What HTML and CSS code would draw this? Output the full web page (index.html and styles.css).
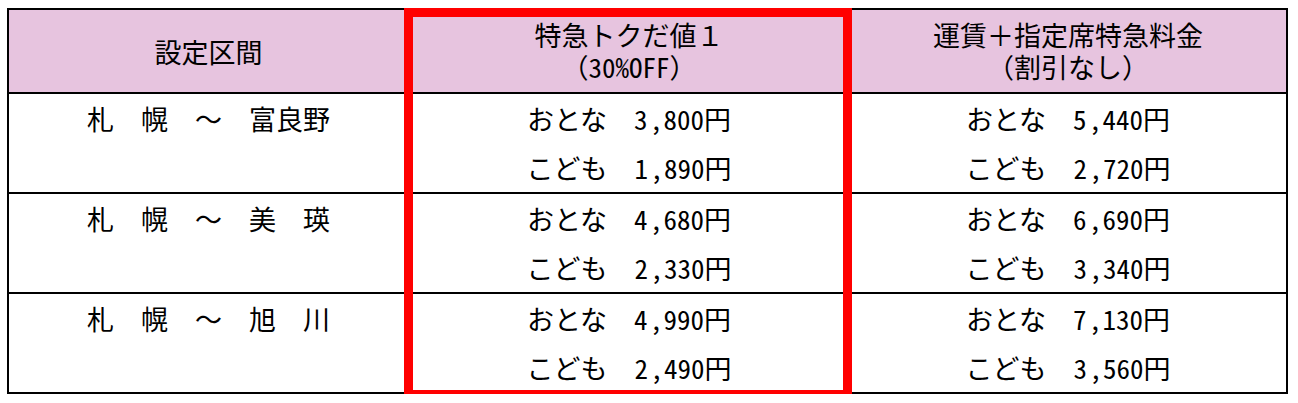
FILE: index.html
```html
<!DOCTYPE html>
<html lang="ja">
<head>
<meta charset="utf-8">
<title>特急トクだ値</title>
<link rel="stylesheet" href="styles.css">
</head>
<body>
<div class="wrap">
  <table class="fares">
    <colgroup>
      <col class="c1">
      <col class="c2">
      <col class="c3">
    </colgroup>
    <thead>
      <tr>
        <th>設定区間</th>
        <th><div class="ln">特急トクだ値１</div><div class="ln">（<span class="hw">30%OFF</span>）</div></th>
        <th><div class="ln">運賃＋指定席特急料金</div><div class="ln">（割引なし）</div></th>
      </tr>
    </thead>
    <tbody>
      <tr>
        <td class="sec"><div class="ln">札　幌　～　富良野</div></td>
        <td><div class="ln">おとな　<span class="hw">3<span class="cm">,</span>800</span>円</div><div class="ln">こども　<span class="hw">1<span class="cm">,</span>890</span>円</div></td>
        <td><div class="ln">おとな　<span class="hw">5<span class="cm">,</span>440</span>円</div><div class="ln">こども　<span class="hw">2<span class="cm">,</span>720</span>円</div></td>
      </tr>
      <tr>
        <td class="sec"><div class="ln">札　幌　～　美　瑛</div></td>
        <td><div class="ln">おとな　<span class="hw">4<span class="cm">,</span>680</span>円</div><div class="ln">こども　<span class="hw">2<span class="cm">,</span>330</span>円</div></td>
        <td><div class="ln">おとな　<span class="hw">6<span class="cm">,</span>690</span>円</div><div class="ln">こども　<span class="hw">3<span class="cm">,</span>340</span>円</div></td>
      </tr>
      <tr>
        <td class="sec"><div class="ln">札　幌　～　旭　川</div></td>
        <td><div class="ln">おとな　<span class="hw">4<span class="cm">,</span>990</span>円</div><div class="ln">こども　<span class="hw">2<span class="cm">,</span>490</span>円</div></td>
        <td><div class="ln">おとな　<span class="hw">7<span class="cm">,</span>130</span>円</div><div class="ln">こども　<span class="hw">3<span class="cm">,</span>560</span>円</div></td>
      </tr>
    </tbody>
  </table>
  <div class="highlight"></div>
</div>
</body>
</html>
```

FILE: styles.css
```css
html, body {
  margin: 0;
  padding: 0;
  background: #ffffff;
}

body {
  font-family: "Noto Sans CJK JP", "Noto Sans", sans-serif;
  color: #000000;
}

.wrap {
  position: relative;
  padding: 8px 0 0 7px;
  width: 1279px;
}

.fares {
  border-collapse: collapse;
  table-layout: fixed;
  width: 1279px;
  font-size: 27px;
}

.c1 { width: 401px; }
.c2 { width: 440px; }
.c3 { width: 438px; }

.fares th,
.fares td {
  border: 2px solid #000000;
  padding: 0;
  text-align: center;
  font-weight: 400;
}

.fares th {
  background: #e7c4df;
  height: 82px;
  vertical-align: middle;
}

.fares th .ln {
  line-height: 32px;
}

.fares td {
  vertical-align: top;
}

.fares td .ln {
  line-height: 49px;
}

.hw {
  font-feature-settings: "hwid" 1;
}

.cm {
  display: inline-block;
  width: 16px;
  text-align: left;
  padding-left: 2px;
  box-sizing: border-box;
}

.highlight {
  position: absolute;
  left: 404px;
  top: 8px;
  width: 430px;
  height: 373px;
  border: 9px solid #ff0000;
  pointer-events: none;
}
```
